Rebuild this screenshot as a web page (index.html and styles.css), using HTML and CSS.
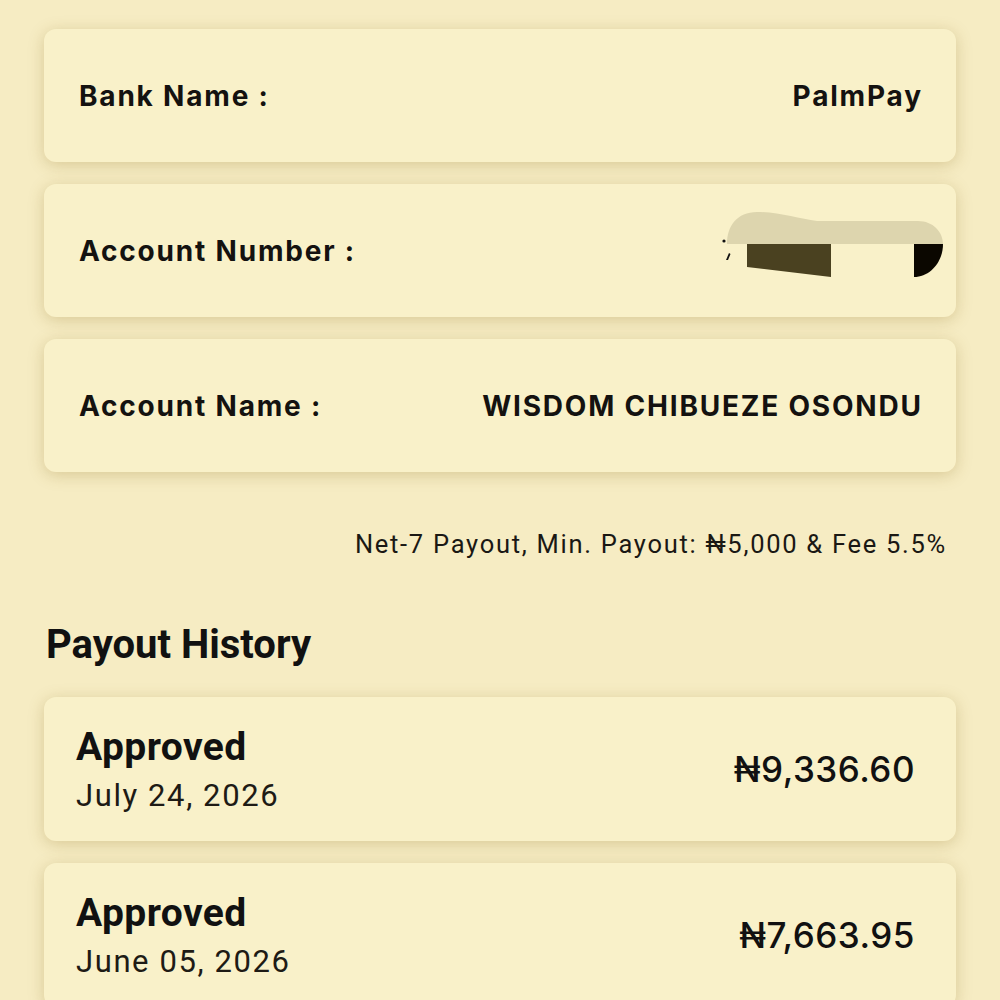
FILE: index.html
```html
<!DOCTYPE html>
<html lang="en">
<head>
<meta charset="utf-8">
<title>Payout</title>
<link rel="stylesheet" href="styles.css">
</head>
<body>
<main class="page">
  <section class="details">
    <div class="card detail">
      <span class="label">Bank Name :</span>
      <span class="value">PalmPay</span>
    </div>
    <div class="card detail">
      <span class="label">Account Number :</span>
      <svg class="redact" width="228" height="93" viewBox="0 0 228 93" aria-hidden="true">
        <path d="M10 40 C10 22 20 8 40 8 C62 8 82 15 100 17 L201 17 C216 17 226 28 226 40 Z" fill="#ddd5ae"/>
        <path d="M30 40 L114 40 L114 73 L30 63 Z" fill="#4a4120"/>
        <path d="M197 40 L226 40 C226 58 213 73 197 73 Z" fill="#0b0700"/>
        <circle cx="7" cy="37" r="1.6" fill="#111"/>
        <path d="M9 56 L12 49 L13.5 50 L11 56 Z" fill="#111"/>
      </svg>
    </div>
    <div class="card detail">
      <span class="label">Account Name :</span>
      <span class="value">WISDOM CHIBUEZE OSONDU</span>
    </div>
  </section>

  <p class="note">Net-7 Payout, Min. Payout: ₦5,000 &amp; Fee 5.5%</p>

  <h2 class="title">Payout History</h2>

  <section class="history">
    <div class="card payout">
      <div class="info">
        <div class="status">Approved</div>
        <div class="date">July 24, 2026</div>
      </div>
      <div class="amount">₦9,336.60</div>
    </div>
    <div class="card payout">
      <div class="info">
        <div class="status">Approved</div>
        <div class="date">June 05, 2026</div>
      </div>
      <div class="amount">₦7,663.95</div>
    </div>
  </section>
</main>
</body>
</html>
```

FILE: styles.css
```css
* { box-sizing: border-box; }
html, body { margin: 0; padding: 0; }
body {
  background: #f6ecc3;
  color: #111;
  font-family: Roboto, "Liberation Sans", sans-serif;
  overflow: hidden;
}
.page {
  padding: 29px 44px 0;
}
.card {
  background: #f9f1c9;
  border-radius: 12px;
  box-shadow: 0 3px 16px rgba(130, 100, 20, 0.26);
}
.details {
  display: flex;
  flex-direction: column;
  gap: 22px;
}
.detail {
  height: 133px;
  padding: 0 35px;
  display: flex;
  align-items: center;
  justify-content: space-between;
  font-family: Inter, "Liberation Sans", sans-serif;
  font-weight: 700;
  font-size: 28px;
  letter-spacing: 1.8px;
  color: #141210;
}
.value {
  margin-right: -1.8px;
}
.redact {
  display: block;
  margin-right: -24px;
}
.note {
  margin: 57px 9px 0 0;
  text-align: right;
  font-size: 25.5px;
  line-height: 30px;
  letter-spacing: 1.72px;
  color: #1a1814;
}
.title {
  margin: 63px 0 29px 2px;
  font-size: 40px;
  line-height: 46px;
  font-weight: 700;
}
.history {
  display: flex;
  flex-direction: column;
  gap: 22px;
}
.payout {
  height: 144px;
  padding: 0 41px 0 32px;
  display: flex;
  align-items: center;
  justify-content: space-between;
}
.status {
  font-size: 39px;
  line-height: 44px;
  font-weight: 700;
  letter-spacing: 0.4px;
}
.date {
  margin-top: 9px;
  font-size: 31px;
  line-height: 36px;
  letter-spacing: 1.6px;
  color: #1e1b15;
}
.amount {
  font-family: Inter, "Liberation Sans", sans-serif;
  font-size: 35px;
  font-weight: 500;
  letter-spacing: 0.5px;
}
```
